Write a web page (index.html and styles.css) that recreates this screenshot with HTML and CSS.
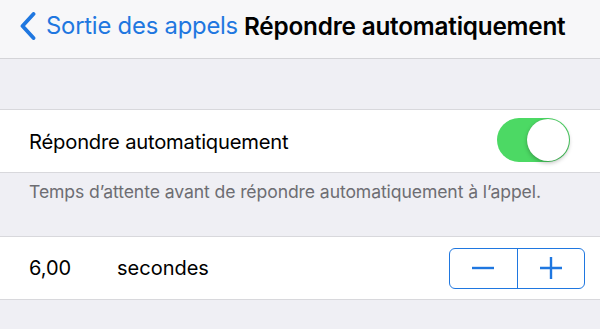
FILE: index.html
```html
<!DOCTYPE html>
<html lang="fr">
<head>
<meta charset="utf-8">
<link rel="stylesheet" href="styles.css">
</head>
<body>
<header class="nav">
  <a class="back">
    <svg class="chev" width="16" height="28" viewBox="0 0 16 28"><path d="M13.5 2 L2.5 14 L13.5 26" fill="none" stroke="currentColor" stroke-width="3.8" stroke-linecap="round" stroke-linejoin="round"/></svg>
    <span class="back-label">Sortie des appels</span>
  </a>
  <h1 class="title">Répondre automatiquement</h1>
</header>
<div class="spacer"></div>
<section class="group">
  <div class="row">
    <span class="label">Répondre automatiquement</span>
    <span class="toggle"><span class="knob"></span></span>
  </div>
</section>
<p class="footer">Temps d’attente avant de répondre automatiquement à l’appel.</p>
<section class="group">
  <div class="row">
    <span class="value">6,00</span>
    <span class="unit">secondes</span>
    <div class="stepper">
      <span class="step"><svg width="24" height="24" viewBox="0 0 24 24"><path d="M1 12 H23" stroke="currentColor" stroke-width="2.4"/></svg></span>
      <span class="step right"><svg width="24" height="24" viewBox="0 0 24 24"><path d="M1 12 H23 M12 1 V23" stroke="currentColor" stroke-width="2.4"/></svg></span>
    </div>
  </div>
</section>
</body>
</html>
```
FILE: styles.css
```css
html, body { margin: 0; padding: 0; }
body {
  background: #efeff4;
  font-family: Inter, "Noto Sans", sans-serif;
  color: #000;
  width: 600px;
  height: 329px;
  overflow: hidden;
}
.nav {
  background: #f7f7f9;
  border-bottom: 1px solid #d4d4d8;
  display: flex;
  align-items: flex-start;
  padding: 12px 0 0 20px;
  box-sizing: border-box;
  height: 59px;
}
.back {
  display: flex;
  align-items: center;
  color: #1f77e0;
  height: 28px;
}
.chev { display: block; margin-right: 10px; }
.back-label { font-size: 23.8px; letter-spacing: -0.2px; line-height: 28px; }
.title {
  margin: 0 0 0 6px;
  font-size: 24.3px;
  font-weight: 600;
  line-height: 28px;
  letter-spacing: -0.2px;
}
.spacer { height: 50px; }
.group {
  background: #fff;
  border-top: 1px solid #d8d8dc;
  border-bottom: 1px solid #d8d8dc;
}
.row {
  height: 62px;
  display: flex;
  align-items: center;
  padding: 0 15px 0 29px;
}
.label { font-size: 20.2px; flex: 1; letter-spacing: -0.2px; }
.toggle {
  width: 73px;
  height: 44px;
  border-radius: 22px;
  background: #4cd964;
  position: relative;
  margin-right: 15px;
  margin-top: -2px;
}
.knob {
  position: absolute;
  right: 1px;
  top: 1px;
  width: 42px;
  height: 42px;
  border-radius: 50%;
  background: #fff;
  box-shadow: 0 2px 4px rgba(0,0,0,0.25), 0 0 1px rgba(0,0,0,0.2);
}
.footer {
  margin: 0;
  height: 63px;
  padding: 8px 0 0 29px;
  box-sizing: border-box;
  font-size: 17.6px;
  color: #6d6d72;
  letter-spacing: -0.1px;
}
.value { font-size: 20px; width: 88px; }
.unit { font-size: 20px; flex: 1; }
.stepper {
  display: flex;
  width: 136px;
  height: 41px;
  border: 1.5px solid #1f77e0;
  border-radius: 6px;
  box-sizing: border-box;
  color: #1f77e0;
}
.step {
  flex: 1;
  display: flex;
  align-items: center;
  justify-content: center;
}
.step.right { border-left: 1.5px solid #1f77e0; }
.step svg { display: block; }
```
